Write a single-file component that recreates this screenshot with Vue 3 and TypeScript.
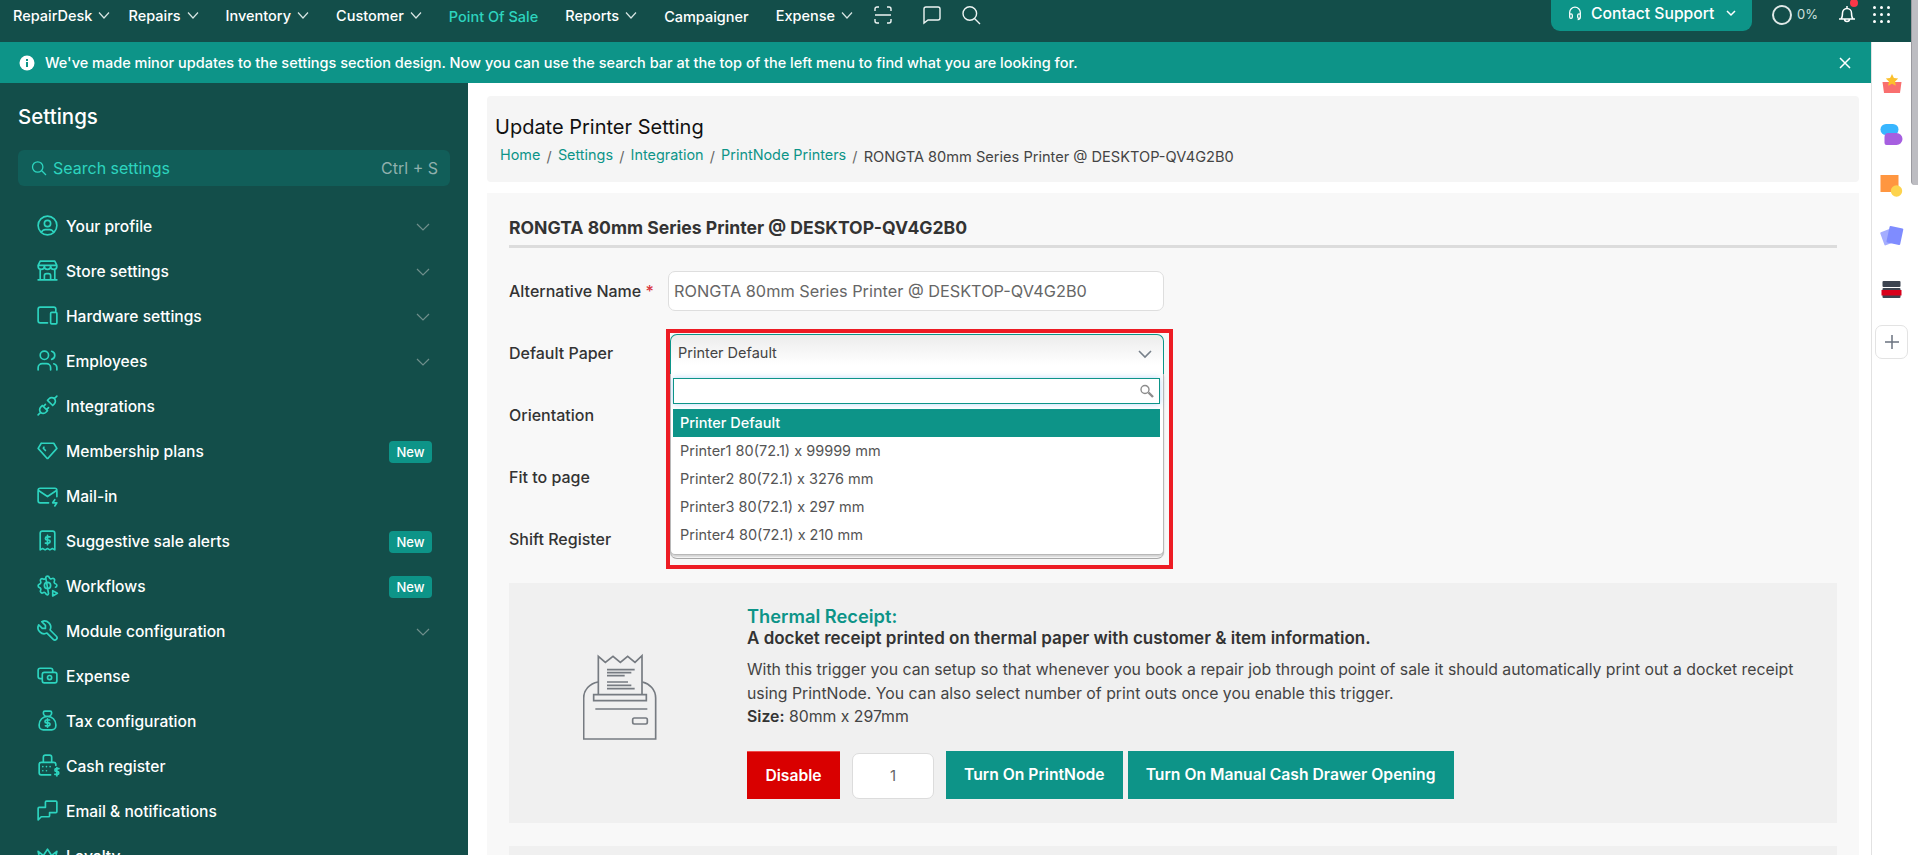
<script setup lang="ts">
interface NavItem { label: string; caret: boolean; active?: boolean; tight?: boolean }
interface MenuItem { label: string; icon: string; caret?: boolean; badge?: boolean }

const navItems: NavItem[] = [
  { label: 'RepairDesk', caret: true, tight: true },
  { label: 'Repairs', caret: true },
  { label: 'Inventory', caret: true },
  { label: 'Customer', caret: true },
  { label: 'Point Of Sale', caret: false, active: true },
  { label: 'Reports', caret: true },
  { label: 'Campaigner', caret: false },
  { label: 'Expense', caret: true },
]

const menu: MenuItem[] = [
  { label: 'Your profile', caret: true, icon: 'M3 12a9 9 0 1 0 18 0a9 9 0 1 0-18 0M9 10a3 3 0 1 0 6 0a3 3 0 1 0-6 0M6.2 18.8a4 4 0 0 1 3.8-2.8h4a4 4 0 0 1 3.8 2.8' },
  { label: 'Store settings', caret: true, icon: 'M3 21h18M3 7v1a3 3 0 0 0 6 0V7m0 1a3 3 0 0 0 6 0V7m0 1a3 3 0 0 0 6 0V7H3l2-4h14l2 4M5 21V10.85M19 21V10.85M9 21v-4a2 2 0 0 1 2-2h2a2 2 0 0 1 2 2v4' },
  { label: 'Hardware settings', caret: true, icon: 'M12 19H5a2 2 0 0 1-2-2V6a2 2 0 0 1 2-2h13a2 2 0 0 1 2 2v3M16 9h4a1 1 0 0 1 1 1v9a1 1 0 0 1-1 1h-4a1 1 0 0 1-1-1v-9a1 1 0 0 1 1-1z' },
  { label: 'Employees', caret: true, icon: 'M5 7a4 4 0 1 0 8 0a4 4 0 1 0-8 0M3 21v-2a4 4 0 0 1 4-4h4a4 4 0 0 1 4 4v2M16 3.13a4 4 0 0 1 0 7.75M21 21v-2a4 4 0 0 0-3-3.85' },
  { label: 'Integrations', icon: 'M7 12l5 5l-1.5 1.5a3.536 3.536 0 1 1-5-5l1.5-1.5zM17 12l-5-5l1.5-1.5a3.536 3.536 0 1 1 5 5l-1.5 1.5zM3 21l2.5-2.5M18.5 5.5L21 3M10 11l-2 2M13 14l-2 2' },
  { label: 'Membership plans', badge: true, icon: 'M6 5h12l3 5l-8.5 9.5a.7.7 0 0 1-1 0L3 10l3-5M10 12l-2-2.2l.6-1' },
  { label: 'Mail-in', icon: 'M13 19H5a2 2 0 0 1-2-2V7a2 2 0 0 1 2-2h14a2 2 0 0 1 2 2v6M3 7l9 6l9-6M19 16l-2 3h4l-2 3' },
  { label: 'Suggestive sale alerts', badge: true, icon: 'M5 21V5a2 2 0 0 1 2-2h10a2 2 0 0 1 2 2v16l-2.3-1.3L14.3 21L12 19.7L9.7 21l-2.4-1.3L5 21M14.5 8.5h-3a1.5 1.5 0 0 0 0 3h1.5a1.5 1.5 0 0 1 0 3h-3M12 7v9' },
  { label: 'Workflows', badge: true, icon: 'M10.325 4.317c.426-1.756 2.924-1.756 3.35 0a1.724 1.724 0 0 0 2.573 1.066c1.543-.94 3.31.826 2.37 2.37a1.724 1.724 0 0 0 1.065 2.572c1.756.426 1.756 2.924 0 3.35M13 19.7c-.426 1.756-1.6 1.756-2.675.3a1.724 1.724 0 0 0-2.573-1.066c-1.543.94-3.31-.826-2.37-2.37a1.724 1.724 0 0 0-1.065-2.572c-1.756-.426-1.756-2.924 0-3.35a1.724 1.724 0 0 0 1.066-2.573c-.94-1.543.826-3.31 2.37-2.37c1 .608 2.296.07 2.572-1.065zM9 12a3 3 0 1 0 6 0a3 3 0 1 0-6 0M17 17v5l4.5-2.5z' },
  { label: 'Module configuration', caret: true, icon: 'M7 10h3V7L6.5 3.5a6 6 0 0 1 8 8l6 6a2 2 0 0 1-3 3l-6-6a6 6 0 0 1-8-8L7 10' },
  { label: 'Expense', icon: 'M7 11a2 2 0 0 1 2-2h10a2 2 0 0 1 2 2v6a2 2 0 0 1-2 2H9a2 2 0 0 1-2-2zM12 14a2 2 0 1 0 4 0a2 2 0 1 0-4 0M17 9V7a2 2 0 0 0-2-2H5a2 2 0 0 0-2 2v6a2 2 0 0 0 2 2h2' },
  { label: 'Tax configuration', icon: 'M9.5 3h5a1.5 1.5 0 0 1 1.5 1.5a3.5 3.5 0 0 1-3.5 3.5h-1A3.5 3.5 0 0 1 8 4.5A1.5 1.5 0 0 1 9.5 3zM4 17v-1a8 8 0 1 1 16 0v1a4 4 0 0 1-4 4H8a4 4 0 0 1-4-4zM14 11.5h-3a1.3 1.3 0 0 0 0 2.8h2a1.3 1.3 0 0 1 0 2.8h-3M12 10.5v8' },
  { label: 'Cash register', icon: 'M8 9V4a2 2 0 0 1 2-2h4a2 2 0 0 1 2 2v5M15 21H6a2 2 0 0 1-2-2v-8a2 2 0 0 1 2-2h12a2 2 0 0 1 2 2v1M7.5 13h.01M11 13h.01M14.500 13h.01M7.500 17h.01M11 17h.01M23 15h-2.500a1.300 1.300 0 0 0 0 2.800h1a1.300 1.300 0 0 1 0 2.700H19M21 14v8' },
  { label: 'Email & notifications', icon: 'M10 4a1 1 0 0 1 1-1h9a1 1 0 0 1 1 1v9a1 1 0 0 1-1 1h-6M10 4v5M10 9H4a1 1 0 0 0-1 1v11l3-3h7a1 1 0 0 0 1-1v-3' },
  { label: 'Loyalty', icon: 'M12 6l4 6l5-4l-2 10H5L3 8l5 4z' },
]

const options: string[] = [
  'Printer Default',
  'Printer1 80(72.1) x 99999 mm',
  'Printer2 80(72.1) x 3276 mm',
  'Printer3 80(72.1) x 297 mm',
  'Printer4 80(72.1) x 210 mm',
]
</script>

<template>
  <div class="page">
    <div class="left">
      <header class="nav">
        <div v-for="n in navItems" :key="n.label" class="nav-item" :class="{ active: n.active, tight: n.tight, flat: !n.caret }">
          <span>{{ n.label }}</span>
          <svg v-if="n.caret" class="caret" viewBox="0 0 12 12"><path d="M1 3.500l5 5.500l5-5.500" /></svg>
        </div>
        <svg class="nav-icon scan" viewBox="0 0 18 18"><path d="M1 5V3a2 2 0 0 1 2-2h2M13 1h2a2 2 0 0 1 2 2v2M1 13v2a2 2 0 0 0 2 2h2M13 17h2a2 2 0 0 0 2-2v-2M1 9h16" /></svg>
        <svg class="nav-icon msg" viewBox="0 0 20 20"><path d="M2 18V4a2 2 0 0 1 2-2h12a2 2 0 0 1 2 2v9a2 2 0 0 1-2 2H6z" /></svg>
        <svg class="nav-icon find" viewBox="0 0 20 20"><path d="M2 8.500a6.800 6.800 0 1 0 13.600 0a6.800 6.800 0 1 0-13.600 0M13.500 13.500L19 19" /></svg>
        <div class="nav-right">
          <button class="support">
            <svg class="headset" viewBox="0 0 18 18"><path d="M3 11V8.500a6 6 0 0 1 12 0V11M3 11.500a1.500 1.500 0 0 1 3 0v2a1.500 1.500 0 0 1-3 0zM12 11.500a1.500 1.500 0 0 1 3 0v2a1.500 1.500 0 0 1-3 0zM15 14a3 3 0 0 1-3 2.500" /></svg>
            <span>Contact Support</span>
            <svg class="caret small" viewBox="0 0 12 12"><path d="M2 4l4 4l4-4" /></svg>
          </button>
          <span class="ring"></span>
          <span class="pct">0%</span>
          <div class="bell-wrap">
            <svg class="bell" viewBox="0 0 18 20"><path d="M1 15h16M3 15c1.500-1.500 1.500-3 1.500-6a4.500 4.500 0 0 1 9 0c0 3 0 4.500 1.500 6M9 2v2M6.500 15a2.500 2.500 0 0 0 5 0" /></svg>
            <span class="dot"></span>
          </div>
          <div class="apps"><i v-for="d in 9" :key="d"></i></div>
        </div>
      </header>

      <div class="under-nav">
        <div class="work">
          <div class="banner">
            <svg class="info" viewBox="0 0 16 16"><circle cx="8" cy="8" r="7.500" fill="#fff" /><rect x="7" y="7" width="2" height="5" fill="#0d9488" /><rect x="7" y="4" width="2" height="2" fill="#0d9488" /></svg>
            <span class="banner-text">We've made minor updates to the settings section design. Now you can use the search bar at the top of the left menu to find what you are looking for.</span>
            <svg class="close" viewBox="0 0 12 12"><path d="M1 1l10 10M11 1L1 11" /></svg>
          </div>

          <div class="split">
            <aside class="side">
              <h2 class="side-title">Settings</h2>
              <div class="side-search">
                <svg class="s-ico" viewBox="0 0 16 16"><path d="M1.500 7a5.200 5.200 0 1 0 10.400 0a5.200 5.200 0 1 0-10.400 0M10.500 10.500L15 15" /></svg>
                <span class="s-text">Search settings</span>
                <span class="s-key">Ctrl + S</span>
              </div>
              <ul class="menu">
                <li v-for="m in menu" :key="m.label" class="menu-item">
                  <svg class="m-ico" viewBox="0 0 24 24"><path :d="m.icon" /></svg>
                  <span class="m-label">{{ m.label }}</span>
                  <svg v-if="m.caret" class="m-caret" viewBox="0 0 14 10"><path d="M1 2l6 6l6-6" /></svg>
                  <span v-if="m.badge" class="badge">New</span>
                </li>
              </ul>
            </aside>

            <main class="content">
              <section class="head">
                <h1 class="head-title">Update Printer Setting</h1>
                <nav class="crumbs">
                  <a>Home</a><i>/</i><a>Settings</a><i>/</i><a>Integration</a><i>/</i><a>PrintNode Printers</a><i>/</i>
                  <span>RONGTA 80mm Series Printer @ DESKTOP-QV4G2B0</span>
                </nav>
              </section>

              <section class="card">
                <h3 class="card-title">RONGTA 80mm Series Printer @ DESKTOP-QV4G2B0</h3>

                <div class="row first">
                  <label class="lbl">Alternative Name <em>*</em></label>
                  <div class="ctl"><div class="input">RONGTA 80mm Series Printer @ DESKTOP-QV4G2B0</div></div>
                </div>

                <div class="row raised">
                  <label class="lbl">Default Paper</label>
                  <div class="ctl">
                    <div class="select open">
                      <span>Printer Default</span>
                      <svg class="sel-caret" viewBox="0 0 14 10"><path d="M1 2l6 6l6-6" /></svg>
                    </div>
                    <div class="drop">
                      <div class="drop-search">
                        <svg class="mag" viewBox="0 0 14 14"><path d="M1 5.500a4 4 0 1 0 8 0a4 4 0 1 0-8 0" /><path class="thick" d="M8.500 8.500L13 13" /></svg>
                      </div>
                      <div v-for="(o, i) in options" :key="o" class="opt" :class="{ sel: i === 0 }">{{ o }}</div>
                    </div>
                    <div class="mark"></div>
                  </div>
                </div>

                <div class="row">
                  <label class="lbl">Orientation</label>
                  <div class="ctl"><div class="select"></div></div>
                </div>
                <div class="row">
                  <label class="lbl">Fit to page</label>
                  <div class="ctl"><div class="select"></div></div>
                </div>
                <div class="row">
                  <label class="lbl">Shift Register</label>
                  <div class="ctl"><div class="select"></div></div>
                </div>

                <div class="panel">
                  <div class="panel-ico">
                    <svg class="printer" viewBox="70 60 222 264">
                      <path d="M115 147C90 152 72 170 72 195V318H288V195C288 170 270 152 248 147" />
                      <path d="M116 185V70L137 88L160 70L182 88L204 70L226 88L247 68V185" />
                      <path d="M102 185H260V203H102zM107 228H263M224 255H258a5 5 0 0 1 5 5v8a5 5 0 0 1-5 5H224a5 5 0 0 1-5-5v-8a5 5 0 0 1 5-5z" />
                      <path d="M142 110H225M142 119H215M142 128H195M142 147H205M142 157H215M142 167H225" />
                    </svg>
                  </div>
                  <div class="panel-body">
                    <h4 class="p-title">Thermal Receipt:</h4>
                    <p class="p-sub">A docket receipt printed on thermal paper with customer &amp; item information.</p>
                    <p class="p-text">With this trigger you can setup so that whenever you book a repair job through point of sale it should automatically print out a docket receipt using PrintNode. You can also select number of print outs once you enable this trigger.<br /><b>Size:</b> 80mm x 297mm</p>
                    <div class="actions">
                      <button class="btn red">Disable</button>
                      <div class="count">1</div>
                      <button class="btn teal">Turn On PrintNode</button>
                      <button class="btn teal close-up">Turn On Manual Cash Drawer Opening</button>
                    </div>
                  </div>
                </div>
                <div class="panel next"></div>
              </section>
            </main>
          </div>
        </div>

        <aside class="rail">
          <svg class="r-ico" viewBox="0 0 28 28"><path d="M4.500 11h19l-1.500 11H6z" fill="#f96f6f" /><path d="M14 3l1.900 3.900l4.300.6l-3.100 3l.7 4.300L14 12.800l-3.800 2l.7-4.300l-3.100-3l4.300-.6z" fill="#fbc02d" /></svg>
          <svg class="r-ico" viewBox="0 0 28 28"><rect x="2.500" y="4" width="18" height="11" rx="5.500" fill="#38b6ff" /><path d="M6.500 17a4 4 0 0 1 4-4h8a6 6 0 0 1 0 12h-10a2 2 0 0 1-2-2z" fill="#a65fe0" /></svg>
          <svg class="r-ico" viewBox="0 0 28 28"><rect x="2.500" y="6" width="18" height="17" fill="#ff9640" /><circle cx="18.500" cy="22" r="5.700" fill="#fdd34d" /></svg>
          <svg class="r-ico wide" viewBox="0 0 28 28"><rect x="4" y="8" width="13" height="14" rx="1" fill="#a4adff" transform="rotate(-20 10 15)" /><rect x="10" y="5" width="14" height="17" rx="1" fill="#7f8cff" transform="rotate(12 17 13)" /></svg>
          <svg class="r-ico wide" viewBox="0 0 28 28"><rect x="4.500" y="6" width="18" height="6" rx="1" fill="#3d4450" /><rect x="4.500" y="13" width="18" height="10" rx="1" fill="#3d4450" /><rect x="3.500" y="15" width="20" height="5.500" fill="#d9001b" /></svg>
          <div class="plus"><svg viewBox="0 0 16 16"><path d="M8 1v14M1 8h14" /></svg></div>
        </aside>
      </div>
    </div>
    <div class="scrollbar"><div class="thumb"></div></div>
  </div>
</template>

<style>
html, body { margin: 0; padding: 0; overflow: hidden; background: #fff; }
</style>

<style scoped>
.page { width: 1918px; height: 855px; display: flex; overflow: hidden; font-family: Inter, "Noto Sans", sans-serif; color: #333; }
.left { width: 1911px; display: flex; flex-direction: column; }
.scrollbar { width: 7px; background: #fff; }
.thumb { height: 185px; background: #bdbdc2; border-left: 1px solid #9a9aa0; border-radius: 0 0 0 4px; box-sizing: border-box; }

.nav { height: 42px; flex: none; background: #134e4a; display: flex; padding: 0 21px 12px 13px; box-sizing: border-box; align-items: center; color: #fff; font-size: 14.500px; font-weight: 500; }
.nav-item { display: flex; align-items: center; gap: 6px; margin-right: 27px; white-space: nowrap; }
.nav-item.tight { margin-right: 18px; }
.nav-item.flat { margin-top: 2px; }
.nav-item.active { color: #2dd4bf; }
.caret { width: 12px; height: 12px; fill: none; stroke: #d7e5e3; stroke-width: 1.200; }
.nav-icon { fill: none; stroke: #eef5f4; stroke-width: 1.400; }
.scan { width: 18px; height: 18px; margin-left: -6px; }
.msg { width: 20px; height: 20px; margin-left: 30px; }
.find { width: 20px; height: 20px; margin-left: 19px; }
.nav-right { margin-left: auto; display: flex; align-items: center; height: 42px; align-self: flex-start; }
.support { height: 31px; width: 201px; align-self: flex-start; margin-right: 20px; border: 0; background: #0d9488; color: #fff; border-radius: 0 0 9px 9px; display: flex; align-items: center; padding: 0 0 5px 16px; box-sizing: border-box; font: 500 15.700px Inter, sans-serif; }
.headset { width: 16px; height: 18px; margin-right: 8px; fill: none; stroke: #fff; stroke-width: 1.400; }
.caret.small { width: 12px; margin-left: 11px; stroke: #fff; stroke-width: 1.500; }
.ring { width: 20px; height: 20px; border: 2px solid #dfe8e7; border-radius: 50%; box-sizing: border-box; margin-bottom: 13px; }
.pct { font-size: 13px; font-weight: 400; color: #cfe0de; margin: 0 0 14px 5px; }
.bell-wrap { position: relative; width: 18px; height: 20px; margin: 0 0 14px 20px; }
.bell { width: 18px; height: 20px; fill: none; stroke: #fff; stroke-width: 1.500; display: block; }
.dot { position: absolute; width: 8px; height: 8px; border-radius: 50%; background: #fb3748; right: -2px; top: -5px; }
.apps { display: grid; grid-template-columns: repeat(3, 3px); gap: 4px; margin: 0 0 14px 17px; }
.apps i { width: 3px; height: 3px; border-radius: 50%; background: #fff; display: block; }

.under-nav { flex: 1; display: flex; min-height: 0; }
.work { width: 1871px; flex: none; display: flex; flex-direction: column; min-height: 0; }
.banner { height: 41px; flex: none; background: #0d9488; color: #fff; display: flex; align-items: center; padding: 0 19px; box-sizing: border-box; font-size: 14.500px; font-weight: 500; }
.info { width: 16px; height: 16px; margin-right: 10px; }
.banner-text { flex: 1; white-space: nowrap; }
.close { width: 12px; height: 12px; fill: none; stroke: #fff; stroke-width: 1.500; margin-right: 1px; }

.split { flex: 1; display: flex; min-height: 0; }
.side { width: 468px; flex: none; background: #134e4a; padding: 22px 18px 0; box-sizing: border-box; overflow: hidden; color: #fff; }
.side-title { margin: 0; font-size: 20.500px; line-height: 24px; font-weight: 500; color: #fff; }
.side-search { margin-top: 21px; height: 36px; width: 432px; background: #115e59; border-radius: 6px; display: flex; align-items: center; padding: 0 12px 0 13px; box-sizing: border-box; font-size: 16px; }
.s-ico { width: 16px; height: 16px; fill: none; stroke: #2dd4bf; stroke-width: 1.300; margin-right: 6px; }
.s-text { color: #2dd4bf; flex: 1; }
.s-key { color: #8fb0ad; }
.menu { list-style: none; margin: 18px 0 0; padding: 0 18px 0 20px; }
.menu-item { height: 45px; display: flex; align-items: center; font-size: 15.600px; font-weight: 500; }
.m-ico { width: 25px; height: 25px; margin: -3px 6px 0 -3px; fill: none; stroke: #2dd4bf; stroke-width: 1.600; stroke-linecap: round; stroke-linejoin: round; flex: none; }
.m-label { flex: 1; white-space: nowrap; }
.m-caret { width: 14px; height: 10px; margin-right: 2px; fill: none; stroke: #6f8f8c; stroke-width: 1.200; }
.badge { width: 43px; height: 22px; line-height: 22px; border-radius: 4px; background: #0d9488; text-align: center; font-size: 13px; color: #fff; }

.content { flex: 1; min-width: 0; padding: 13px 12px 0 19px; overflow: hidden; background: #fff; }
.head { height: 86px; background: #f5f5f5; border-radius: 4px; padding: 19px 8px 0; box-sizing: border-box; }
.head-title { margin: 0; font-size: 20px; line-height: 24px; font-weight: 400; color: #111; }
.crumbs { margin-top: 8px; padding-left: 5px; font-size: 14.400px; line-height: 20px; display: flex; align-items: center; color: #444; }
.crumbs a { color: #0d9488; position: relative; top: -2px; }
.crumbs i { font-style: normal; color: #666; margin: 0 6.200px; }
.crumbs span { font-size: 14.600px; }
.card { margin-top: 11px; height: 700px; background: #f8f8f8; padding: 0 22px; box-sizing: border-box; overflow: hidden; }
.card-title { margin: 0; padding: 25px 0 7px; border-bottom: 3px solid #dcdcdc; font-size: 17.600px; line-height: 20px; font-weight: 700; color: #333; white-space: nowrap; }

.row { display: flex; align-items: center; height: 40px; margin-top: 22px; position: relative; }
.row.first { margin-top: 23px; }
.row.raised { z-index: 2; }
.lbl { width: 159px; flex: none; font-size: 16px; font-weight: 500; color: #333; white-space: nowrap; }
.lbl em { font-style: normal; color: #d9363e; }
.ctl { width: 496px; position: relative; height: 40px; }
.input { width: 496px; height: 40px; box-sizing: border-box; background: #fff; border: 1px solid #dedede; border-radius: 7px; line-height: 38px; padding-left: 5px; font-size: 16.300px; color: #666; white-space: nowrap; }
.select { margin: 0 0 0 2px; width: 494px; height: 40px; box-sizing: border-box; background: #fff; border: 1px solid #cfcfcf; border-bottom-color: #aaa; border-radius: 7px; }
.select.open { height: 41px; margin-top: 1px; display: flex; align-items: center; justify-content: space-between; padding: 0 11px 6px 7px; border: 1px solid #0d9488; border-bottom: 0; border-radius: 7px 7px 0 0; background: linear-gradient(#ececec, #fff 75%); font-size: 14.500px; color: #444; }
.sel-caret { width: 14px; height: 10px; fill: none; stroke: #77808a; stroke-width: 1.600; margin-top: 3px; }
.drop { position: absolute; left: 2px; top: 41px; width: 494px; height: 181px; box-sizing: border-box; background: #fff; border: 1px solid #b8b8b8; border-top: 0; border-radius: 0 0 5px 5px; padding: 4px 3px 0 2px; box-shadow: 0 2px 2px rgba(0, 0, 0, .18); }
.drop-search { height: 26px; margin-bottom: 5px; box-sizing: border-box; border: 1px solid #0d9488; box-shadow: 0 0 6px rgba(100, 170, 240, .45); position: relative; background: #fff; }
.mag { position: absolute; right: 5px; top: 5px; width: 14px; height: 14px; fill: none; stroke: #8c8c8c; stroke-width: 1.400; }
.thick { stroke-width: 2.400; }
.opt { height: 28px; line-height: 28px; padding-left: 7px; font-size: 14.500px; color: #555; }
.opt.sel { background: #0d9488; color: #fff; font-weight: 500; }
.mark { position: absolute; left: -2px; top: -4px; width: 507px; height: 240px; box-sizing: border-box; border: 4px solid #ed1c24; pointer-events: none; }

.panel { margin-top: 24px; height: 240px; background: #f0f0f0; display: flex; box-sizing: border-box; padding-top: 22px; }
.panel.next { padding: 0; margin-top: 23px; }
.panel-ico { width: 238px; flex: none; display: flex; justify-content: center; padding: 48px 0 0; box-sizing: border-box; margin-left: -8px; margin-right: 8px; }
.printer { width: 74px; height: 88px; fill: none; stroke: #767b81; stroke-width: 5; }
.panel-body { flex: 1; min-width: 0; }
.p-title { margin: 0; font-size: 18.300px; line-height: 22px; font-weight: 600; color: #0d9488; }
.p-sub { margin: 0; font-size: 17px; line-height: 22px; font-weight: 600; color: #333; white-space: nowrap; }
.p-text { margin: 9px 0 0; font-size: 15.800px; line-height: 23.500px; color: #444; width: 1060px; }
.p-text b { font-weight: 600; color: #333; }
.actions { margin-top: 22px; display: flex; gap: 12px; height: 48px; }
.btn { height: 48px; border: 0; color: #fff; font: 600 15.700px Inter, sans-serif; padding: 0 18px; white-space: nowrap; box-sizing: border-box; }
.btn.red { width: 93px; padding: 0; background: #d90000; border-top: 1px solid #f04a4a; }
.btn.teal { background: #0d9488; }
.btn.close-up { margin-left: -7px; }
.count { width: 82px; height: 46px; margin-top: 2px; background: #fff; border: 1px solid #dcdcdc; border-radius: 7px; box-sizing: border-box; text-align: center; line-height: 44px; font-size: 15px; color: #666; }

.rail { width: 40px; flex: none; border-left: 1px solid #e2e2e2; box-sizing: border-box; display: flex; flex-direction: column; align-items: center; padding-top: 29px; gap: 21px; background: #fff; }
.r-ico { width: 28px; height: 28px; flex: none; }
.r-ico.wide { margin-top: 4px; }
.plus { width: 33px; height: 34px; flex: none; margin-top: 1px; box-sizing: border-box; border: 1px solid #e3e3e3; border-radius: 7px; display: flex; align-items: center; justify-content: center; }
.plus svg { width: 16px; height: 16px; fill: none; stroke: #6b7380; stroke-width: 1.500; }
</style>
